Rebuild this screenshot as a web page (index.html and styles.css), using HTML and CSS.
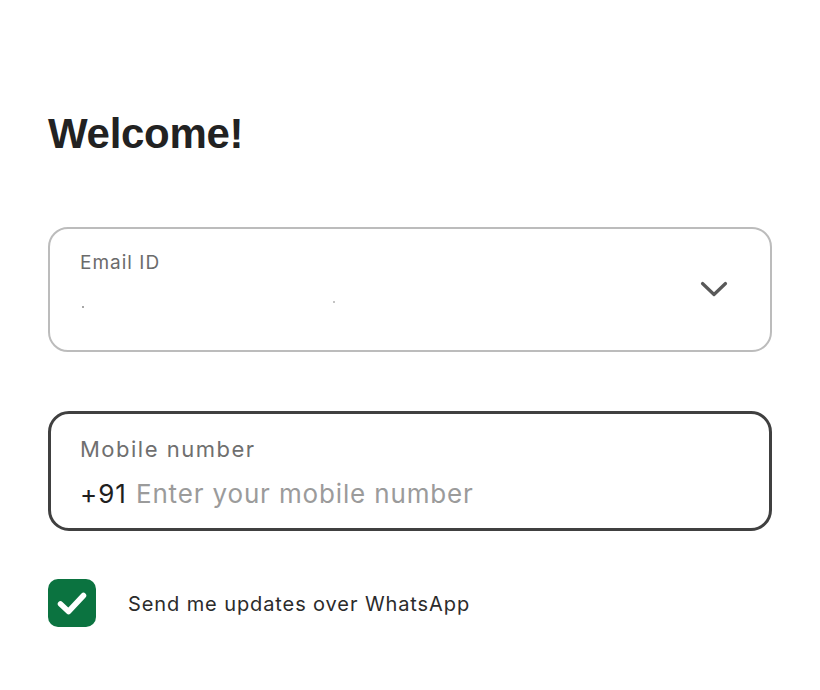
FILE: index.html
```html
<!DOCTYPE html>
<html lang="en">
<head>
<meta charset="utf-8">
<title>Welcome</title>
<link rel="stylesheet" href="styles.css">
</head>
<body>
<main class="page">
  <h1 class="title">Welcome!</h1>

  <div class="field field-email">
    <div class="field-body">
      <div class="label">Email ID</div>
      <div class="masked"><span class="dot"></span><span class="dot dot-2"></span></div>
    </div>
    <svg class="chevron" width="28" height="18" viewBox="0 0 28 18" aria-hidden="true">
      <path d="M2.5 3.5 L14 14.5 L25.5 3.5" fill="none" stroke="#595959" stroke-width="3.2" stroke-linecap="round" stroke-linejoin="round"/>
    </svg>
  </div>

  <div class="field field-mobile">
    <div class="label label-lg">Mobile number</div>
    <div class="phone-row"><span class="code">+91</span><span class="placeholder">Enter your mobile number</span></div>
  </div>

  <label class="consent">
    <span class="check">
      <svg width="48" height="48" viewBox="0 0 48 48" aria-hidden="true">
        <path d="M12.5 25 L20.5 32.5 L35.5 16.5" fill="none" stroke="#ffffff" stroke-width="5.5" stroke-linecap="round" stroke-linejoin="round"/>
      </svg>
    </span>
    <span class="consent-text">Send me updates over WhatsApp</span>
  </label>
</main>
</body>
</html>
```

FILE: styles.css
```css
* { box-sizing: border-box; }

html, body {
  margin: 0;
  padding: 0;
  background: #ffffff;
}

body {
  font-family: Inter, "Noto Sans", "Liberation Sans", sans-serif;
  color: #222222;
}

.page {
  padding: 108px 48px 0 48px;
  width: 820px;
}

.title {
  margin: 0 0 67px 0;
  font-family: "Liberation Sans", Arial, sans-serif;
  font-weight: 700;
  font-size: 42px;
  line-height: 52px;
  letter-spacing: -0.3px;
  color: #222222;
}

.field {
  width: 724px;
  border-radius: 20px;
  background: #ffffff;
}

.field-email {
  height: 125px;
  border: 2px solid #bcbcbc;
  padding: 22px 42px 0 30px;
  display: flex;
  align-items: flex-start;
  justify-content: space-between;
}

.field-body {
  flex: 1;
}

.label {
  font-size: 19px;
  line-height: 24px;
  color: #6b6b6b;
  letter-spacing: 1px;
}

.masked {
  position: relative;
  height: 40px;
}

.dot {
  position: absolute;
  left: 2px;
  top: 31px;
  width: 2px;
  height: 2px;
  background: #8a8a8a;
  border-radius: 1px;
}

.dot-2 {
  left: 253px;
  top: 26px;
  background: #b0b0b0;
}

.chevron {
  margin-top: 29px;
  flex: none;
}

.field-mobile {
  margin-top: 59px;
  height: 120px;
  border: 3px solid #404040;
  border-radius: 21px;
  padding: 21px 29px 0 29px;
}

.label-lg {
  font-size: 22px;
  line-height: 28px;
  letter-spacing: 1.5px;
  color: #6f6f6f;
}

.phone-row {
  margin-top: 15px;
  font-size: 26px;
  line-height: 32px;
  display: flex;
  gap: 9px;
}

.code {
  color: #1f1f1f;
  letter-spacing: 1px;
}

.placeholder {
  color: #9b9b9b;
  letter-spacing: 0.85px;
}

.consent {
  margin-top: 48px;
  display: flex;
  align-items: center;
  gap: 32px;
}

.check {
  width: 48px;
  height: 48px;
  border-radius: 10px;
  background: #0b7340;
  display: flex;
  flex: none;
}

.consent-text {
  padding-top: 2px;
  font-size: 20px;
  line-height: 24px;
  letter-spacing: 0.9px;
  color: #2b2b2b;
}
```
